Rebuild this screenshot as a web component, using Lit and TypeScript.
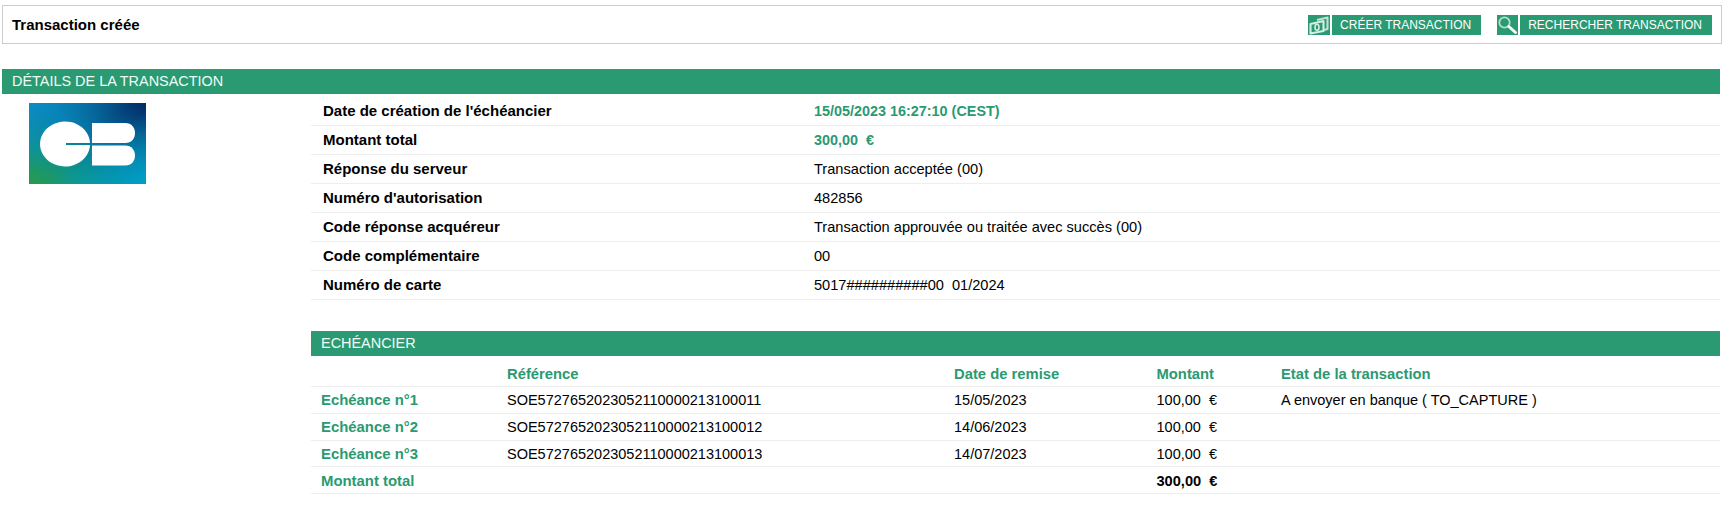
import { LitElement, html, css, svg } from "lit";
import { customElement } from "lit/decorators.js";

const details: [string, string, boolean][] = [
  ["Date de création de l'échéancier", "15/05/2023 16:27:10 (CEST)", true],
  ["Montant total", "300,00\u00a0 €", true],
  ["Réponse du serveur", "Transaction acceptée (00)", false],
  ["Numéro d'autorisation", "482856", false],
  ["Code réponse acquéreur", "Transaction approuvée ou traitée avec succès (00)", false],
  ["Code complémentaire", "00", false],
  ["Numéro de carte", "5017##########00\u00a0 01/2024", false],
];

const schedule = [
  ["Echéance n°1", "SOE5727652023052110000213100011", "15/05/2023", "100,00\u00a0 €", "A envoyer en banque ( TO_CAPTURE )"],
  ["Echéance n°2", "SOE5727652023052110000213100012", "14/06/2023", "100,00\u00a0 €", ""],
  ["Echéance n°3", "SOE5727652023052110000213100013", "14/07/2023", "100,00\u00a0 €", ""],
];

const moneyIcon = svg`<svg viewBox="0 0 22 20" width="22" height="20" aria-hidden="true">
  <g fill="none" stroke="#d6ede3" stroke-width="2.1" stroke-linejoin="round">
    <path d="M9 5 L19.5 2.5 V14 L16 15" stroke="#c0e3d5" />
    <path d="M2.5 9 L15.5 6 V16 L2.5 18.5 Z" />
    <ellipse cx="9" cy="12.2" rx="2" ry="3" stroke-width="1.6" />
  </g>
</svg>`;

const searchIcon = svg`<svg viewBox="0 0 21 20" width="21" height="20" aria-hidden="true">
  <circle cx="7.5" cy="7.5" r="5.2" fill="none" stroke="#b5dfcd" stroke-width="1.8" />
  <path d="M11.8 11.5 L18.5 17.5" stroke="#f4faf7" stroke-width="3" stroke-linecap="round" />
</svg>`;

@customElement("app-root")
export class AppRoot extends LitElement {
  static styles = css`
    :host {
      display: block;
      font-family: "Liberation Sans", Arial, sans-serif;
      font-size: 14.6px;
      color: #000;
      padding: 5px 9px 0 2px;
      background: #fff;
    }
    .top {
      display: flex;
      align-items: center;
      justify-content: space-between;
      height: 39px;
      box-sizing: border-box;
      margin-right: -2px;
      border: 1px solid #cccccc;
      padding: 0 9px 0 9px;
    }
    .title {
      font-weight: 700;
      font-size: 15px;
    }
    .actions {
      display: flex;
      gap: 16px;
    }
    .action {
      display: flex;
      gap: 2px;
    }
    .icon {
      display: block;
      height: 20px;
      background: #2a9a72;
    }
    .label {
      display: flex;
      align-items: center;
      height: 20px;
      padding: 0 10px 0 8px;
      background: #2a9a72;
      color: #fff;
      font-size: 12px;
    }
    .bar {
      height: 25px;
      line-height: 25px;
      padding-left: 10px;
      background: #2a9a72;
      color: #f2faf6;
      font-size: 14.45px;
    }
    .section {
      margin-top: 25px;
    }
    .body {
      display: flex;
    }
    .logo-col {
      width: 309px;
      flex: none;
      padding: 9px 0 0 27px;
      box-sizing: border-box;
    }
    .logo {
      display: block;
    }
    .main {
      flex: 1;
      min-width: 0;
    }
    table {
      width: 100%;
      border-collapse: collapse;
      table-layout: fixed;
    }
    .details td {
      height: 29px;
      padding: 0;
      border-bottom: 1px solid #eeeeee;
      box-sizing: border-box;
    }
    .details tr:first-child td {
      height: 31px;
      padding-top: 3px;
    }
    .details td:first-child {
      width: 503px;
      padding-left: 12px;
      font-weight: 700;
      font-size: 15px;
    }
    .details td.hl {
      color: #2a9a72;
      font-weight: 700;
      font-size: 14.4px;
    }
    .schedule-sec {
      margin-top: 31px;
    }
    .schedule th,
    .schedule td {
      padding: 0;
      text-align: left;
      border-bottom: 1px solid #eeeeee;
      box-sizing: border-box;
    }
    .schedule td {
      height: 26.75px;
      padding-top: 1px;
      font-size: 14.5px;
    }
    .schedule th {
      height: 31px;
      color: #2a9a72;
      font-weight: 700;
      font-size: 14.8px;
      padding-top: 6px;
    }
    .schedule td.name {
      color: #2a9a72;
      font-weight: 700;
      font-size: 14.9px;
    }
    .schedule th:first-child,
    .schedule td:first-child {
      padding-left: 10px;
    }
    .schedule td.total {
      font-weight: 700;
      font-size: 14.6px;
    }
    .c1 { width: 196px; }
    .c2 { width: 447px; }
    .c3 { width: 202.5px; }
    .c4 { width: 124.5px; }
  `;

  private action(icon: unknown, text: string) {
    return html`<div class="action"><span class="icon">${icon}</span><span class="label">${text}</span></div>`;
  }

  render() {
    return html`
      <div class="top">
        <span class="title">Transaction créée</span>
        <div class="actions">
          ${this.action(moneyIcon, "CRÉER TRANSACTION")}
          ${this.action(searchIcon, "RECHERCHER TRANSACTION")}
        </div>
      </div>

      <section class="section">
        <div class="bar">DÉTAILS DE LA TRANSACTION</div>
        <div class="body">
          <div class="logo-col">
            <svg class="logo" width="117" height="81" viewBox="0 0 117 81" role="img" aria-label="CB">
              <defs>
                <linearGradient id="cb" x1="0" y1="1" x2="1" y2="0">
                  <stop offset="0" stop-color="#2a9a4a" />
                  <stop offset="0.25" stop-color="#0f9484" />
                  <stop offset="0.55" stop-color="#0678a6" />
                  <stop offset="1" stop-color="#032a66" />
                </linearGradient>
                <linearGradient id="cb2" x1="0" y1="0" x2="1" y2="1">
                  <stop offset="0" stop-color="#0a8fca" stop-opacity="0.9" />
                  <stop offset="0.45" stop-color="#0a8fca" stop-opacity="0" />
                  <stop offset="0.55" stop-color="#00a0c0" stop-opacity="0" />
                  <stop offset="1" stop-color="#00a0c8" stop-opacity="1" />
                </linearGradient>
                <filter id="soft" x="-5%" y="-5%" width="110%" height="110%">
                  <feGaussianBlur stdDeviation="0.4" />
                </filter>
              </defs>
              <rect width="117" height="81" fill="url(#cb)" />
              <rect width="117" height="81" fill="url(#cb2)" />
              <g fill="#fff" filter="url(#soft)">
                <path d="M61 40 H37 V42 H61 A25 22.5 0 1 1 61 40 Z" />
                <path d="M63 20 H96 C103 20 106 25 106 30 C106 35 103 40 96 40 H63 Z" />
                <path d="M63 42.5 H96 C103 42.5 106 47.5 106 52.5 C106 57.5 103 62.5 96 62.5 H63 Z" />
              </g>
            </svg>
          </div>
          <div class="main">
            <table class="details">
              <tbody>
                ${details.map(
                  ([k, v, hl]) => html`<tr><td>${k}</td><td class=${hl ? "hl" : ""}>${v}</td></tr>`
                )}
              </tbody>
            </table>
            <section class="schedule-sec">
              <div class="bar">ECHÉANCIER</div>
              <table class="schedule">
                <thead>
                  <tr>
                    <th class="c1"></th>
                    <th class="c2">Référence</th>
                    <th class="c3">Date de remise</th>
                    <th class="c4">Montant</th>
                    <th>Etat de la transaction</th>
                  </tr>
                </thead>
                <tbody>
                  ${schedule.map(
                    (r) => html`<tr>
                      <td class="name">${r[0]}</td>
                      <td>${r[1]}</td>
                      <td>${r[2]}</td>
                      <td>${r[3]}</td>
                      <td>${r[4]}</td>
                    </tr>`
                  )}
                  <tr>
                    <td class="name">Montant total</td>
                    <td></td>
                    <td></td>
                    <td class="total">300,00\u00a0 €</td>
                    <td></td>
                  </tr>
                </tbody>
              </table>
            </section>
          </div>
        </div>
      </section>
    `;
  }
}
